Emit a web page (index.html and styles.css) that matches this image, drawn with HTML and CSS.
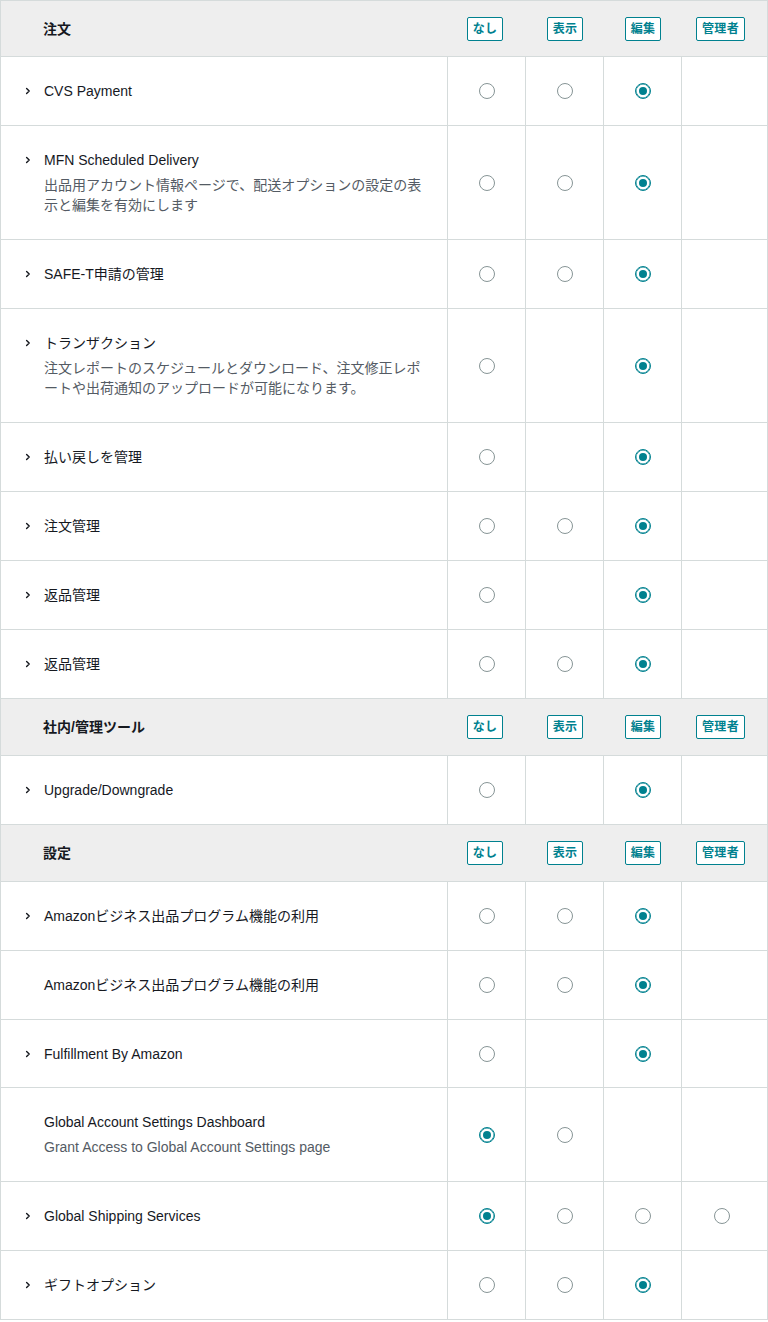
FILE: index.html
```html
<!DOCTYPE html>
<html lang="ja">
<head>
<meta charset="utf-8">
<title>権限</title>
<link rel="stylesheet" href="styles.css">
</head>
<body>
<div class="table">
  <div class="row head">
    <div class="name">注文</div>
    <div class="hc c1"><span class="badge">なし</span></div>
    <div class="hc"><span class="badge">表示</span></div>
    <div class="hc"><span class="badge">編集</span></div>
    <div class="hc c4"><span class="badge">管理者</span></div>
  </div>

  <div class="row">
    <div class="name"><span class="chev"><svg width="8" height="8" viewBox="0 0 8 8"><path d="M2.6 1.4 L5.2 4 L2.6 6.6"/></svg></span><div class="txt"><div class="title">CVS Payment</div></div></div>
    <div class="cell"><span class="radio"></span></div>
    <div class="cell"><span class="radio"></span></div>
    <div class="cell"><span class="radio on"></span></div>
    <div class="cell last"></div>
  </div>

  <div class="row">
    <div class="name"><span class="chev"><svg width="8" height="8" viewBox="0 0 8 8"><path d="M2.6 1.4 L5.2 4 L2.6 6.6"/></svg></span><div class="txt"><div class="title">MFN Scheduled Delivery</div><div class="desc">出品用アカウント情報ページで、配送オプションの設定の表示と編集を有効にします</div></div></div>
    <div class="cell"><span class="radio"></span></div>
    <div class="cell"><span class="radio"></span></div>
    <div class="cell"><span class="radio on"></span></div>
    <div class="cell last"></div>
  </div>

  <div class="row">
    <div class="name"><span class="chev"><svg width="8" height="8" viewBox="0 0 8 8"><path d="M2.6 1.4 L5.2 4 L2.6 6.6"/></svg></span><div class="txt"><div class="title">SAFE-T申請の管理</div></div></div>
    <div class="cell"><span class="radio"></span></div>
    <div class="cell"><span class="radio"></span></div>
    <div class="cell"><span class="radio on"></span></div>
    <div class="cell last"></div>
  </div>

  <div class="row">
    <div class="name"><span class="chev"><svg width="8" height="8" viewBox="0 0 8 8"><path d="M2.6 1.4 L5.2 4 L2.6 6.6"/></svg></span><div class="txt"><div class="title">トランザクション</div><div class="desc">注文レポートのスケジュールとダウンロード、注文修正レポートや出荷通知のアップロードが可能になります。</div></div></div>
    <div class="cell"><span class="radio"></span></div>
    <div class="cell"></div>
    <div class="cell"><span class="radio on"></span></div>
    <div class="cell last"></div>
  </div>

  <div class="row">
    <div class="name"><span class="chev"><svg width="8" height="8" viewBox="0 0 8 8"><path d="M2.6 1.4 L5.2 4 L2.6 6.6"/></svg></span><div class="txt"><div class="title">払い戻しを管理</div></div></div>
    <div class="cell"><span class="radio"></span></div>
    <div class="cell"></div>
    <div class="cell"><span class="radio on"></span></div>
    <div class="cell last"></div>
  </div>

  <div class="row">
    <div class="name"><span class="chev"><svg width="8" height="8" viewBox="0 0 8 8"><path d="M2.6 1.4 L5.2 4 L2.6 6.6"/></svg></span><div class="txt"><div class="title">注文管理</div></div></div>
    <div class="cell"><span class="radio"></span></div>
    <div class="cell"><span class="radio"></span></div>
    <div class="cell"><span class="radio on"></span></div>
    <div class="cell last"></div>
  </div>

  <div class="row">
    <div class="name"><span class="chev"><svg width="8" height="8" viewBox="0 0 8 8"><path d="M2.6 1.4 L5.2 4 L2.6 6.6"/></svg></span><div class="txt"><div class="title">返品管理</div></div></div>
    <div class="cell"><span class="radio"></span></div>
    <div class="cell"></div>
    <div class="cell"><span class="radio on"></span></div>
    <div class="cell last"></div>
  </div>

  <div class="row">
    <div class="name"><span class="chev"><svg width="8" height="8" viewBox="0 0 8 8"><path d="M2.6 1.4 L5.2 4 L2.6 6.6"/></svg></span><div class="txt"><div class="title">返品管理</div></div></div>
    <div class="cell"><span class="radio"></span></div>
    <div class="cell"><span class="radio"></span></div>
    <div class="cell"><span class="radio on"></span></div>
    <div class="cell last"></div>
  </div>

  <div class="row head">
    <div class="name">社内/管理ツール</div>
    <div class="hc c1"><span class="badge">なし</span></div>
    <div class="hc"><span class="badge">表示</span></div>
    <div class="hc"><span class="badge">編集</span></div>
    <div class="hc c4"><span class="badge">管理者</span></div>
  </div>

  <div class="row">
    <div class="name"><span class="chev"><svg width="8" height="8" viewBox="0 0 8 8"><path d="M2.6 1.4 L5.2 4 L2.6 6.6"/></svg></span><div class="txt"><div class="title">Upgrade/Downgrade</div></div></div>
    <div class="cell"><span class="radio"></span></div>
    <div class="cell"></div>
    <div class="cell"><span class="radio on"></span></div>
    <div class="cell last"></div>
  </div>

  <div class="row head">
    <div class="name">設定</div>
    <div class="hc c1"><span class="badge">なし</span></div>
    <div class="hc"><span class="badge">表示</span></div>
    <div class="hc"><span class="badge">編集</span></div>
    <div class="hc c4"><span class="badge">管理者</span></div>
  </div>

  <div class="row">
    <div class="name"><span class="chev"><svg width="8" height="8" viewBox="0 0 8 8"><path d="M2.6 1.4 L5.2 4 L2.6 6.6"/></svg></span><div class="txt"><div class="title">Amazonビジネス出品プログラム機能の利用</div></div></div>
    <div class="cell"><span class="radio"></span></div>
    <div class="cell"><span class="radio"></span></div>
    <div class="cell"><span class="radio on"></span></div>
    <div class="cell last"></div>
  </div>

  <div class="row">
    <div class="name"><span class="chev"></span><div class="txt"><div class="title">Amazonビジネス出品プログラム機能の利用</div></div></div>
    <div class="cell"><span class="radio"></span></div>
    <div class="cell"><span class="radio"></span></div>
    <div class="cell"><span class="radio on"></span></div>
    <div class="cell last"></div>
  </div>

  <div class="row short">
    <div class="name"><span class="chev"><svg width="8" height="8" viewBox="0 0 8 8"><path d="M2.6 1.4 L5.2 4 L2.6 6.6"/></svg></span><div class="txt"><div class="title">Fulfillment By Amazon</div></div></div>
    <div class="cell"><span class="radio"></span></div>
    <div class="cell"></div>
    <div class="cell"><span class="radio on"></span></div>
    <div class="cell last"></div>
  </div>

  <div class="row">
    <div class="name"><span class="chev"></span><div class="txt"><div class="title">Global Account Settings Dashboard</div><div class="desc">Grant Access to Global Account Settings page</div></div></div>
    <div class="cell"><span class="radio on"></span></div>
    <div class="cell"><span class="radio"></span></div>
    <div class="cell"></div>
    <div class="cell last"></div>
  </div>

  <div class="row">
    <div class="name"><span class="chev"><svg width="8" height="8" viewBox="0 0 8 8"><path d="M2.6 1.4 L5.2 4 L2.6 6.6"/></svg></span><div class="txt"><div class="title">Global Shipping Services</div></div></div>
    <div class="cell"><span class="radio on"></span></div>
    <div class="cell"><span class="radio"></span></div>
    <div class="cell"><span class="radio"></span></div>
    <div class="cell last"><span class="radio"></span></div>
  </div>

  <div class="row">
    <div class="name"><span class="chev"><svg width="8" height="8" viewBox="0 0 8 8"><path d="M2.6 1.4 L5.2 4 L2.6 6.6"/></svg></span><div class="txt"><div class="title">ギフトオプション</div></div></div>
    <div class="cell"><span class="radio"></span></div>
    <div class="cell"><span class="radio"></span></div>
    <div class="cell"><span class="radio on"></span></div>
    <div class="cell last"></div>
  </div>
</div>
</body>
</html>
```

FILE: styles.css
```css
html, body {
  margin: 0;
  padding: 0;
  background: #ffffff;
}

body {
  font-family: "Liberation Sans", "Noto Sans CJK JP", sans-serif;
  font-size: 14px;
  line-height: 20px;
  color: #16191f;
}

.table {
  width: 768px;
  box-sizing: border-box;
  border: 1px solid #d5dbdb;
  border-bottom: none;
}

.row {
  display: grid;
  grid-template-columns: 447px 78px 78px 78px 85px;
  border-bottom: 1px solid #d5dbdb;
}

.row.head {
  background: #eeeeee;
  min-height: 56px;
}

.row.head:first-child {
  min-height: 55px;
}

.head .name {
  font-weight: bold;
  padding: 0 24px 0 42px;
  display: flex;
  align-items: center;
  border-right: none;
}

.hc {
  display: flex;
  align-items: center;
  justify-content: center;
}

.hc.c1 {
  padding-right: 4px;
}

.hc.c4 {
  padding-right: 8px;
}

.badge {
  display: inline-block;
  box-sizing: border-box;
  height: 24px;
  line-height: 22px;
  padding: 0 5px;
  border: 1px solid #00818f;
  border-radius: 2px;
  color: #00818f;
  font-size: 12px;
  font-weight: bold;
  background: #ffffff;
  letter-spacing: 0.3px;
}

.name {
  box-sizing: border-box;
  border-right: 1px solid #d5dbdb;
  display: grid;
  grid-template-columns: 20px 1fr;
  padding: 24px 24px 24px 23px;
}

.row.short .name {
  padding-bottom: 23px;
}

.chev {
  display: flex;
  align-items: center;
  height: 20px;
}

.chev svg {
  display: block;
}

.chev path {
  fill: none;
  stroke: #16191f;
  stroke-width: 1.4;
  stroke-linecap: round;
  stroke-linejoin: round;
}

.title {
  color: #16191f;
}

.desc {
  color: #545b64;
  margin-top: 5px;
}

.cell {
  box-sizing: border-box;
  border-right: 1px solid #d5dbdb;
  display: flex;
  align-items: center;
  justify-content: center;
}

.cell.last {
  border-right: none;
  padding-right: 6px;
}

.radio {
  display: block;
  width: 16px;
  height: 16px;
  box-sizing: border-box;
  border: 1px solid #879596;
  border-radius: 50%;
  background: #ffffff;
  position: relative;
}

.radio.on {
  border-color: #00818f;
  box-shadow: inset 0 0 0 0.5px #00818f;
}

.radio.on::after {
  content: "";
  position: absolute;
  left: 3px;
  top: 3px;
  width: 8px;
  height: 8px;
  border-radius: 50%;
  background: #00818f;
}
```
